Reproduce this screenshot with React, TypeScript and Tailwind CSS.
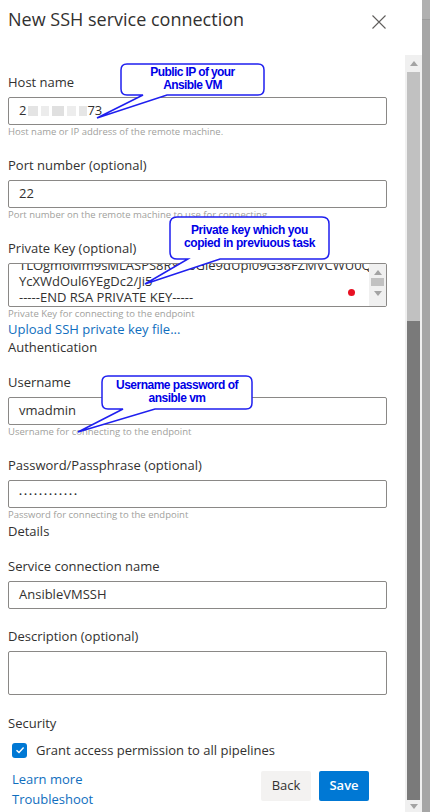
import React from "react";

const font = { fontFamily: '"Open Sans", "Noto Sans", sans-serif' };

function Label({ children }: { children: React.ReactNode }) {
  return <div className="mt-4 h-5 text-[13px] leading-5 text-[#323130]">{children}</div>;
}

function Helper({ children }: { children: React.ReactNode }) {
  return <div className="h-[14px] text-[9.5px] leading-[14px] text-[#a19f9d]">{children}</div>;
}

function Field({ children }: { children: React.ReactNode }) {
  return (
    <div className="mt-[5px] flex h-7 items-center rounded-[2px] border border-[#8a8886] bg-white pl-[10px] text-[13px] text-[#323130]">
      {children}
    </div>
  );
}

function SectionHead({ children }: { children: React.ReactNode }) {
  return <div className="text-[13px] leading-[18px] text-[#323130]">{children}</div>;
}

// annotation balloons drawn on top of the screenshot
function Callouts() {
  const stroke = "#1f1fef";
  const balloonFont = { fontFamily: '"Liberation Sans", Arial, sans-serif' };
  return (
    <div className="pointer-events-none absolute inset-0">
      <svg width="405" height="812" className="absolute left-0 top-0">
        <path
          d="M127,64 H258 Q264,64 264,70 V89 Q264,95 258,95 H167 L97,118 L143,95 H127 Q121,95 121,89 V70 Q121,64 127,64 Z"
          fill="white"
          stroke={stroke}
          strokeWidth="1.5"
        />
        <path
          d="M177,217 H322 Q329,217 329,224 V252 Q329,259 322,259 H220 L145,284 L188,259 H177 Q170,259 170,252 V224 Q170,217 177,217 Z"
          fill="white"
          stroke={stroke}
          strokeWidth="1.5"
        />
        <path
          d="M108,376 H246 Q252,376 252,382 V403 Q252,409 246,409 H155 L78,432 L123,409 H108 Q102,409 102,403 V382 Q102,376 108,376 Z"
          fill="white"
          stroke={stroke}
          strokeWidth="1.5"
        />
      </svg>
      <div
        className="absolute left-[121px] top-[66px] w-[143px] text-center text-[12px] font-bold leading-[13px] tracking-[-0.6px] text-[#0000e6]"
        style={balloonFont}
      >
        Public IP of your
        <br />
        Ansible VM
      </div>
      <div
        className="absolute left-[170px] top-[224px] w-[159px] text-center text-[12px] font-bold leading-[13px] tracking-[-0.4px] text-[#0000e6]"
        style={balloonFont}
      >
        Private key which you
        <br />
        copied in previuous task
      </div>
      <div
        className="absolute left-[102px] top-[379px] w-[150px] text-center text-[12px] font-bold leading-[13px] tracking-[-0.5px] text-[#0000e6]"
        style={balloonFont}
      >
        Username password of
        <br />
        ansible vm
      </div>
    </div>
  );
}

function Triangle({ up }: { up?: boolean }) {
  return (
    <svg width="8" height="5" viewBox="0 0 8 5">
      <path d={up ? "M0,5 L4,0 L8,5 Z" : "M0,0 L8,0 L4,5 Z"} fill="#a3a3a3" />
    </svg>
  );
}

export default function App() {
  return (
    <div className="relative flex h-[812px] w-[430px] overflow-hidden bg-white" style={font}>
      <div className="flex w-[422px] flex-col">
        {/* header */}
        <div className="flex h-[55px] shrink-0 items-start justify-between pl-2 pr-9">
          <h1 className="mt-[5px] text-[18px] font-normal leading-7 text-[#323130]">New SSH service connection</h1>
          <svg width="14" height="14" viewBox="0 0 14 14" className="mt-[15px]">
            <path d="M0.5,0.5 L13.5,13.5 M13.5,0.5 L0.5,13.5" stroke="#605e5c" strokeWidth="1.1" />
          </svg>
        </div>

        <div className="flex min-h-0 flex-1">
          {/* form */}
          <div className="w-[405px] pl-2 pr-[18px] pt-px">
            <Label>Host name</Label>
            <Field>
              <span>2</span>
              <span className="ml-[2px] flex items-center gap-[3px]">
                <span className="h-[10px] w-[10px] bg-[#e4e4e4]" />
                <span className="h-[10px] w-[8px] bg-[#ececec]" />
                <span className="h-[10px] w-[12px] bg-[#e0e0e0]" />
                <span className="h-[10px] w-[9px] bg-[#ededed]" />
                <span className="h-[10px] w-[8px] bg-[#e6e6e6]" />
              </span>
              <span>73</span>
            </Field>
            <Helper>Host name or IP address of the remote machine.</Helper>

            <Label>Port number (optional)</Label>
            <Field>22</Field>
            <Helper>Port number on the remote machine to use for connecting.</Helper>

            <Label>Private Key (optional)</Label>
            <div className="mt-[5px] flex h-[44px] overflow-hidden rounded-[2px] border border-[#8a8886]">
              <div className="relative flex-1 overflow-hidden pl-[10px] text-[13px] leading-4 text-[#323130]">
                <div className="-mt-[7px] whitespace-nowrap">
                  <div>TLOgmoMm9sMLASPS8RxN6Gle9dUpl09G38FZMVCWU0Q</div>
                  <div>YcXWdOul6YEgDc2/Ji5</div>
                  <div>-----END RSA PRIVATE KEY-----</div>
                </div>
                <span className="absolute right-[14px] top-[25px] h-[7px] w-[7px] rounded-full bg-[#e81123]" />
              </div>
              <div className="flex w-[17px] flex-col items-center bg-[#f0f0f0]">
                <div className="mt-[6px]">
                  <Triangle up />
                </div>
                <div className="mt-[3px] h-[8px] w-[13px] bg-[#c1c1c1]" />
                <div className="mt-[5px]">
                  <Triangle />
                </div>
              </div>
            </div>
            <Helper>Private Key for connecting to the endpoint</Helper>
            <div className="text-[13px] leading-[17px] text-[#106ebe]">Upload SSH private key file...</div>
            <SectionHead>Authentication</SectionHead>

            <Label>Username</Label>
            <Field>vmadmin</Field>
            <Helper>Username for connecting to the endpoint</Helper>

            <Label>Password/Passphrase (optional)</Label>
            <Field>
              <span className="text-[8px] tracking-[2px]">••••••••••••</span>
            </Field>
            <Helper>Password for connecting to the endpoint</Helper>
            <SectionHead>Details</SectionHead>

            <Label>Service connection name</Label>
            <Field>AnsibleVMSSH</Field>

            <div className="mt-[17px] h-5 text-[13px] leading-5 text-[#323130]">Description (optional)</div>
            <div className="mt-[5px] h-[44px] rounded-[2px] border border-[#8a8886]" />

            <div className="mt-[18px] h-5 text-[13px] leading-5 text-[#323130]">Security</div>
            <div className="mt-[7px] flex items-center pl-1">
              <span className="flex h-[15px] w-[15px] items-center justify-center rounded-[3px] bg-[#0078d4]">
                <svg width="10" height="10" viewBox="0 0 10 10">
                  <path d="M1.5,5.2 L4,7.5 L8.6,2.6" fill="none" stroke="white" strokeWidth="1.4" />
                </svg>
              </span>
              <span className="ml-[9px] text-[13px] leading-5 text-[#323130]">Grant access permission to all pipelines</span>
            </div>

            <div className="mt-[9px] flex items-start justify-between pl-1 pr-[18px]">
              <div className="flex flex-col text-[13px] leading-5 text-[#106ebe]">
                <span>Learn more</span>
                <span>Troubleshoot</span>
              </div>
              <div className="mt-[2px] flex gap-2">
                <button className="h-[30px] w-[50px] rounded-[2px] bg-[#f3f2f1] text-[13px] text-[#323130]">Back</button>
                <button className="h-[30px] w-[50px] rounded-[2px] bg-[#0078d4] text-[13px] font-semibold text-white">Save</button>
              </div>
            </div>
          </div>

          {/* scrollbar */}
          <div className="flex w-[17px] flex-col items-center bg-[#f0f0f0]">
            <div className="flex h-[17px] items-center">
              <Triangle up />
            </div>
            <div className="h-[249px] w-[13px] bg-[#c1c1c1]" />
            <div className="h-[479px] w-[13px] bg-[#7a7a7a]" />
            <div className="flex h-[12px] items-center">
              <Triangle />
            </div>
          </div>
        </div>
      </div>
      <div className="flex w-[8px] flex-col">
        <div className="h-[20px] border-b border-[#9c9c9c] bg-[#b0b0b0]" />
        <div className="flex-1 bg-[#a6a6a6]" />
      </div>
      <Callouts />
    </div>
  );
}
